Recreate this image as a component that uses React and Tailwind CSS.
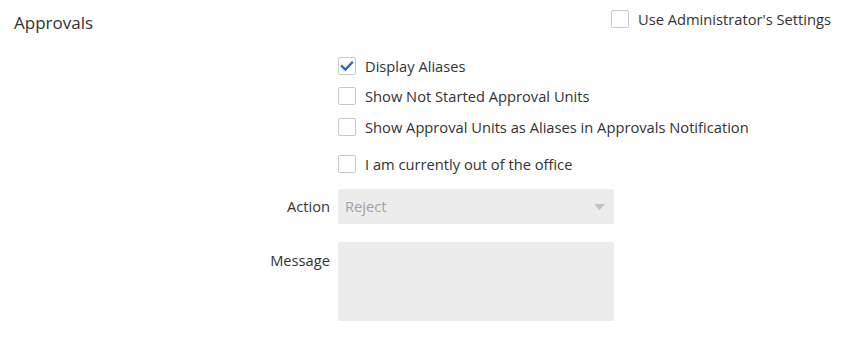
import { useState } from 'react';

const Box = ({ checked, onClick }) => (
  <button
    type="button"
    onClick={onClick}
    className="w-[18px] h-[18px] shrink-0 rounded-[2px] border border-[#c9c9c9] bg-white flex items-center justify-center"
  >
    {checked && (
      <svg width="14" height="14" viewBox="0 0 14 14" fill="none">
        <path d="M2 7.3 L5.4 10.6 L12 3.6" stroke="#1b6ec2" strokeWidth="2.4" strokeLinecap="square" />
      </svg>
    )}
  </button>
);

const CheckRow = ({ label, checked, onToggle, className = '' }) => (
  <label className={`flex items-center gap-[9px] h-[18px] cursor-pointer ${className}`}>
    <Box checked={checked} onClick={onToggle} />
    <span>{label}</span>
  </label>
);

export default function App() {
  const [admin, setAdmin] = useState(false);
  const [opts, setOpts] = useState({ aliases: true, notStarted: false, unitsAsAliases: false, outOfOffice: false });
  const toggle = (k) => setOpts({ ...opts, [k]: !opts[k] });

  return (
    <main className="w-[841px] h-[346px] bg-white text-[#333] text-[14.7px] font-['Open_Sans','Noto_Sans',sans-serif] overflow-hidden">
      <header className="flex justify-between pl-[14px] pr-[10px] pt-[10px]">
        <h1 className="text-[17px] leading-[26px]">Approvals</h1>
        <CheckRow label="Use Administrator's Settings" checked={admin} onToggle={() => setAdmin(!admin)} />
      </header>

      <div className="grid grid-cols-[330px_276px] gap-x-2 mt-[21px]">
        <div />
        <div className="flex flex-col">
          <CheckRow label="Display Aliases" checked={opts.aliases} onToggle={() => toggle('aliases')} />
          <CheckRow label="Show Not Started Approval Units" checked={opts.notStarted} onToggle={() => toggle('notStarted')} className="mt-[12px]" />
          <CheckRow label="Show Approval Units as Aliases in Approvals Notification" checked={opts.unitsAsAliases} onToggle={() => toggle('unitsAsAliases')} className="mt-[13px] whitespace-nowrap" />
          <CheckRow label="I am currently out of the office" checked={opts.outOfOffice} onToggle={() => toggle('outOfOffice')} className="mt-[19px]" />
        </div>

        <span className="text-right leading-[35px] mt-[16px]">Action</span>
        <div className="mt-[16px] h-[35px] rounded-[2px] bg-[#ececec] flex items-center justify-between pl-[7px] pr-[9px] text-[#a3a3a3]">
          <span>Reject</span>
          <svg width="11" height="6" viewBox="0 0 11 6"><path d="M0 0 H11 L5.5 6 Z" fill="#c2c2c2" /></svg>
        </div>

        <span className="text-right mt-[18px] leading-[20px] pt-[8px]">Message</span>
        <textarea className="mt-[18px] h-[79px] rounded-[2px] bg-[#ececec] resize-none outline-none p-2" />
      </div>
    </main>
  );
}
